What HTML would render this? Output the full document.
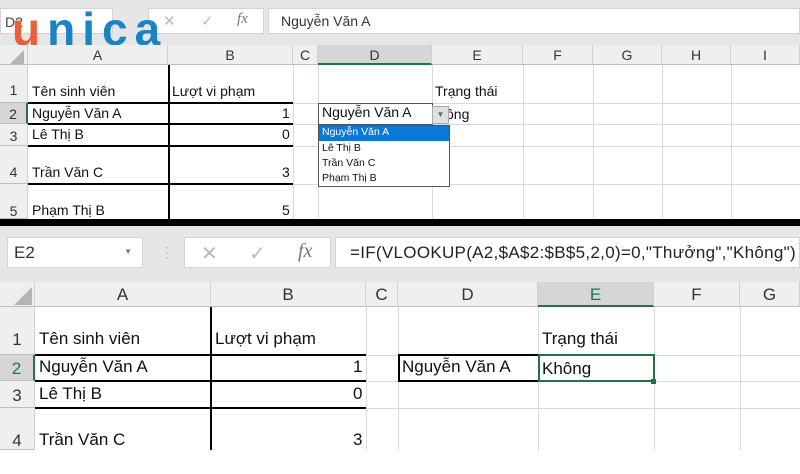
<!DOCTYPE html>
<html><head><meta charset="utf-8"><style>
*{margin:0;padding:0;box-sizing:border-box}
body{width:800px;height:450px;overflow:hidden;background:#fff;position:relative;font-family:"Liberation Sans",Arial,sans-serif;color:#111}
div{position:absolute}
.bar{background:#e6e6e6}
.box{background:#fff;border:1px solid #d4d4d4}
.hdr{background:#efefef;border-right:1px solid #d0d0d0;border-bottom:1px solid #bdbdbd;text-align:center;color:#333}
.gl{background:#dadada}
.t{white-space:nowrap}
.bk{background:#000}
</style></head><body>
<!-- TOP -->
<div class="bar" style="left:0;top:0;width:800px;height:45px"></div>
<div class="box" style="left:0;top:8px;width:113px;height:26px;font-size:14px;padding:5px 4px;color:#444">D2</div>
<div class="box" style="left:148px;top:8px;width:116px;height:26px;color:#bbb;font-size:15px"><span style="position:absolute;left:14px;top:3px">✕</span><span style="position:absolute;left:52px;top:3px">✓</span><span style="position:absolute;left:88px;top:2px;font-family:'Liberation Serif';font-style:italic;color:#777">fx</span></div>
<div class="box" style="left:268px;top:8px;width:532px;height:26px;font-size:14px;padding:4px 12px;color:#333">Nguyễn Văn A</div>
<div class="t" style="left:12px;top:8px;font-size:46px;font-weight:bold;letter-spacing:7px;line-height:42px"><span style="color:#e8613c">u</span><span style="color:#1a83c4">nica</span></div>
<div class="hdr" style="left:0;top:45px;width:28px;height:20px"></div>
<div style="left:10px;top:50px;width:0;height:0;border-left:14px solid transparent;border-bottom:14px solid #b5b5b5"></div>
<div class="hdr" style="left:28px;top:45px;width:140px;height:20px;font-size:14px;line-height:20px">A</div>
<div class="hdr" style="left:168px;top:45px;width:125px;height:20px;font-size:14px;line-height:20px">B</div>
<div class="hdr" style="left:293px;top:45px;width:25px;height:20px;font-size:14px;line-height:20px">C</div>
<div class="hdr" style="left:318px;top:45px;width:114px;height:20px;font-size:14px;line-height:20px;background:#d6d6d6;border-bottom:2px solid #217346">D</div>
<div class="hdr" style="left:432px;top:45px;width:91px;height:20px;font-size:14px;line-height:20px">E</div>
<div class="hdr" style="left:523px;top:45px;width:70px;height:20px;font-size:14px;line-height:20px">F</div>
<div class="hdr" style="left:593px;top:45px;width:69px;height:20px;font-size:14px;line-height:20px">G</div>
<div class="hdr" style="left:662px;top:45px;width:69px;height:20px;font-size:14px;line-height:20px">H</div>
<div class="hdr" style="left:731px;top:45px;width:69px;height:20px;font-size:14px;line-height:20px">I</div>
<!-- row headers top -->
<div class="hdr" style="left:0;top:65px;width:28px;height:38px;font-size:14px;line-height:50px">1</div>
<div class="hdr" style="left:0;top:103px;width:28px;height:21px;font-size:14px;line-height:22px;background:#d6d6d6;border-right:2px solid #217346">2</div>
<div class="hdr" style="left:0;top:124px;width:28px;height:22px;font-size:14px;line-height:24px">3</div>
<div class="hdr" style="left:0;top:146px;width:28px;height:38px;font-size:14px;line-height:52px">4</div>
<div class="hdr" style="left:0;top:184px;width:28px;height:35px;font-size:14px;line-height:54px">5</div>
<!-- gridlines top -->
<div class="gl" style="left:318px;top:65px;width:1px;height:154px"></div>
<div class="gl" style="left:432px;top:65px;width:1px;height:154px"></div>
<div class="gl" style="left:523px;top:65px;width:1px;height:154px"></div>
<div class="gl" style="left:593px;top:65px;width:1px;height:154px"></div>
<div class="gl" style="left:662px;top:65px;width:1px;height:154px"></div>
<div class="gl" style="left:731px;top:65px;width:1px;height:154px"></div>
<div class="gl" style="left:293px;top:65px;width:1px;height:154px"></div>
<div class="gl" style="left:28px;top:103px;width:772px;height:1px"></div>
<div class="gl" style="left:28px;top:124px;width:772px;height:1px"></div>
<div class="gl" style="left:28px;top:146px;width:772px;height:1px"></div>
<div class="gl" style="left:28px;top:184px;width:772px;height:1px"></div>
<div class="bk" style="left:168px;top:65px;width:2px;height:154px"></div>
<div class="bk" style="left:28px;top:102px;width:265px;height:2px"></div>
<div class="bk" style="left:28px;top:123px;width:265px;height:2px"></div>
<div class="bk" style="left:28px;top:145px;width:265px;height:2px"></div>
<div class="bk" style="left:28px;top:183px;width:265px;height:2px"></div>
<div class="t" style="left:32px;top:83px;font-size:14px">Tên sinh viên</div>
<div class="t" style="left:172px;top:83px;font-size:14px">Lượt vi phạm</div>
<div class="t" style="left:32px;top:105px;font-size:14px">Nguyễn Văn A</div>
<div class="t" style="left:32px;top:126px;font-size:14px">Lê Thị B</div>
<div class="t" style="left:32px;top:164px;font-size:14px">Trần Văn C</div>
<div class="t" style="left:32px;top:202px;font-size:14px">Phạm Thị B</div>
<div class="t" style="left:282px;top:105px;font-size:14px">1</div>
<div class="t" style="left:282px;top:126px;font-size:14px">0</div>
<div class="t" style="left:282px;top:164px;font-size:14px">3</div>
<div class="t" style="left:282px;top:202px;font-size:14px">5</div>
<div class="t" style="left:435px;top:83px;font-size:14px">Trạng thái</div>
<div class="t" style="left:446px;top:106px;font-size:14px">ông</div>
<div style="left:318px;top:103px;width:115px;height:22px;border:1px solid #555;background:#fff"></div>
<div class="t" style="left:322px;top:104px;font-size:14px">Nguyễn Văn A</div>
<div style="left:432px;top:106px;width:17px;height:18px;background:#e0e0e0;border:1px solid #aaa;font-size:8px;color:#666;text-align:center;line-height:16px">▼</div>
<div style="left:318px;top:125px;height:62px;width:132px;border:1px solid #555;background:#fff"></div>
<div style="left:319px;top:126px;width:130px;height:15px;background:#0a78d7"></div>
<div class="t" style="left:322px;top:126px;font-size:10.5px;color:#fff">Nguyễn Văn A</div>
<div class="t" style="left:322px;top:142px;font-size:10.5px">Lê Thị B</div>
<div class="t" style="left:322px;top:157px;font-size:10.5px">Trần Văn C</div>
<div class="t" style="left:322px;top:172px;font-size:10.5px">Phạm Thị B</div>
<!-- separator -->
<div class="bk" style="left:0;top:219px;width:800px;height:7px"></div>
<!-- BOTTOM -->
<div class="bar" style="left:0;top:226px;width:800px;height:56px"></div>
<div class="box" style="left:7px;top:237px;width:136px;height:31px;font-size:17px;padding:5px 6px;color:#333">E2<span style="position:absolute;right:10px;top:9px;font-size:8px;color:#777">▼</span></div>
<div class="t" style="left:160px;top:244px;font-size:14px;color:#bbb">⋮</div>
<div class="box" style="left:184px;top:237px;width:147px;height:31px;color:#bbb;font-size:20px"><span style="position:absolute;left:16px;top:3px">✕</span><span style="position:absolute;left:64px;top:3px">✓</span><span style="position:absolute;left:113px;top:2px;font-family:'Liberation Serif';font-style:italic;color:#777">fx</span></div>
<div class="box" style="left:335px;top:237px;width:465px;height:31px;font-size:17px;padding:5px 14px;color:#222;letter-spacing:0.3px"><span class="t">=IF(VLOOKUP(A2,$A$2:$B$5,2,0)=0,"Thưởng","Không")</span></div>
<div class="hdr" style="left:0;top:282px;width:35px;height:25px"></div>
<div style="left:14px;top:287px;width:0;height:0;border-left:18px solid transparent;border-bottom:18px solid #b5b5b5"></div>
<div class="hdr" style="left:35px;top:282px;width:176px;height:25px;font-size:17px;line-height:26px">A</div>
<div class="hdr" style="left:211px;top:282px;width:155px;height:25px;font-size:17px;line-height:26px">B</div>
<div class="hdr" style="left:366px;top:282px;width:32px;height:25px;font-size:17px;line-height:26px">C</div>
<div class="hdr" style="left:398px;top:282px;width:140px;height:25px;font-size:17px;line-height:26px">D</div>
<div class="hdr" style="left:538px;top:282px;width:116px;height:25px;font-size:17px;line-height:26px;background:#d6d6d6;border-bottom:2px solid #217346;color:#217346">E</div>
<div class="hdr" style="left:654px;top:282px;width:86px;height:25px;font-size:17px;line-height:26px">F</div>
<div class="hdr" style="left:740px;top:282px;width:60px;height:25px;font-size:17px;line-height:26px">G</div>
<div class="hdr" style="left:0;top:307px;width:35px;height:48px;font-size:17px;line-height:66px">1</div>
<div class="hdr" style="left:0;top:355px;width:35px;height:26px;font-size:17px;line-height:28px;background:#d6d6d6;border-right:2px solid #217346;color:#217346">2</div>
<div class="hdr" style="left:0;top:381px;width:35px;height:27px;font-size:17px;line-height:30px">3</div>
<div class="hdr" style="left:0;top:408px;width:35px;height:42px;font-size:17px;line-height:66px">4</div>
<div class="gl" style="left:366px;top:307px;width:1px;height:143px"></div>
<div class="gl" style="left:398px;top:307px;width:1px;height:143px"></div>
<div class="gl" style="left:538px;top:307px;width:1px;height:143px"></div>
<div class="gl" style="left:654px;top:307px;width:1px;height:143px"></div>
<div class="gl" style="left:740px;top:307px;width:1px;height:143px"></div>
<div class="gl" style="left:35px;top:355px;width:765px;height:1px"></div>
<div class="gl" style="left:35px;top:381px;width:765px;height:1px"></div>
<div class="gl" style="left:35px;top:408px;width:765px;height:1px"></div>
<div class="bk" style="left:210px;top:307px;width:2px;height:143px"></div>
<div class="bk" style="left:35px;top:354px;width:331px;height:2px"></div>
<div class="bk" style="left:35px;top:380px;width:331px;height:2px"></div>
<div class="bk" style="left:35px;top:407px;width:331px;height:2px"></div>
<div style="left:398px;top:354px;width:141px;height:28px;border:2px solid #000;border-right:none"></div>
<div style="left:538px;top:354px;width:117px;height:28px;border:2px solid #217346"></div>
<div style="left:651px;top:379px;width:5px;height:5px;background:#217346"></div>
<div class="t" style="left:39px;top:329px;font-size:17px">Tên sinh viên</div>
<div class="t" style="left:215px;top:329px;font-size:17px">Lượt vi phạm</div>
<div class="t" style="left:39px;top:357px;font-size:17px">Nguyễn Văn A</div>
<div class="t" style="left:39px;top:384px;font-size:17px">Lê Thị B</div>
<div class="t" style="left:39px;top:430px;font-size:17px">Trần Văn C</div>
<div class="t" style="left:353px;top:357px;font-size:17px">1</div>
<div class="t" style="left:353px;top:384px;font-size:17px">0</div>
<div class="t" style="left:353px;top:430px;font-size:17px">3</div>
<div class="t" style="left:402px;top:357px;font-size:17px">Nguyễn Văn A</div>
<div class="t" style="left:542px;top:329px;font-size:17px">Trạng thái</div>
<div class="t" style="left:542px;top:359px;font-size:17px">Không</div>
</body></html>
